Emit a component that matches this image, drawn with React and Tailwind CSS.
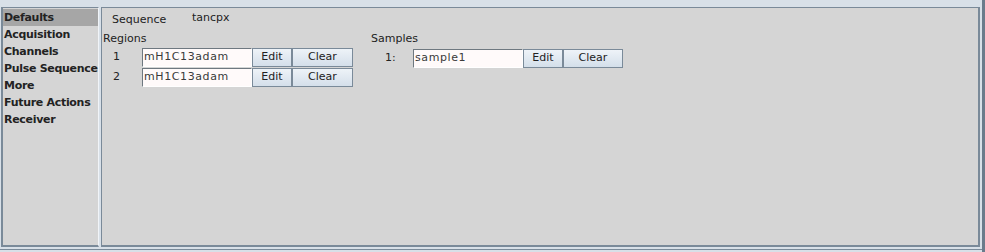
const FONT = { fontFamily: '"DejaVu Sans", Verdana, sans-serif' };

const sections = ['Defaults', 'Acquisition', 'Channels', 'Pulse Sequence', 'More', 'Future Actions', 'Receiver'];

const Button = ({ children, w }) => (
  <div
    className={`${w} h-[19px] flex items-center justify-center border border-[#7a8a99] bg-gradient-to-b from-[#eef3f8] to-[#d4dfea] text-[11px] text-[#222]`}
  >
    {children}
  </div>
);

const Field = ({ value }) => (
  <div className="w-[110px] h-[19px] flex items-center pl-[1px] border-t border-l border-[#6e7880] border-b border-r border-b-white border-r-white bg-[#fffafa] text-[11px] tracking-[0.6px] text-[#3a3a3a]">
    {value}
  </div>
);

const Row = ({ label, labelW, labelPad, value, clearW }) => (
  <div className="flex items-center">
    <div className={`${labelW} ${labelPad} text-[11px] text-[#222]`}>{label}</div>
    <Field value={value} />
    <Button w="w-[40px]">Edit</Button>
    <Button w={clearW}>Clear</Button>
  </div>
);

export default function App() {
  return (
    <div className="w-[985px] h-[252px] bg-[#d8e0e8] flex overflow-hidden" style={FONT}>
      <div className="flex-1 flex pt-[7px] pl-[1px] gap-[2px] h-[250px] border-b border-[#7a8a99]">
        <div className="w-[98px] h-[240px] bg-[#d5d5d5] border-l-2 border-t border-b-2 border-r border-[#7a8a99] border-r-[#f0f4f8] pt-[1px]">
          {sections.map((s, i) => (
            <div
              key={s}
              className={`h-[17px] leading-[17px] pl-[1px] text-[11px] font-bold tracking-[-0.3px] whitespace-nowrap text-[#222] ${i === 0 ? 'bg-[#a6a6a6]' : ''}`}
            >
              {s}
            </div>
          ))}
        </div>
        <div className="w-[879px] h-[240px] bg-[#d5d5d5] border-l border-t border-b-2 border-r-2 border-[#7a8a99] pl-[1px]">
          <div className="flex items-center h-[21px] pt-[3px] pl-[9px] text-[11px] text-[#222]">
            <span className="w-[80px]">Sequence</span>
            <span className="-mt-[3px]">tancpx</span>
          </div>
          <div className="flex gap-[18px]">
            <div className="flex flex-col">
              <div className="h-[19px] leading-[19px] text-[11px] text-[#222]">Regions</div>
              <div className="flex flex-col gap-[1px]">
                <Row label="1" labelW="w-[39px]" labelPad="pl-[10px]" value="mH1C13adam" clearW="w-[61px]" />
                <Row label="2" labelW="w-[39px]" labelPad="pl-[10px]" value="mH1C13adam" clearW="w-[61px]" />
              </div>
            </div>
            <div className="flex flex-col">
              <div className="h-[19px] leading-[19px] text-[11px] text-[#222]">Samples</div>
              <div className="mt-[1px]">
                <Row label="1:" labelW="w-[42px]" labelPad="pl-[14px]" value="sample1" clearW="w-[60px]" />
              </div>
            </div>
          </div>
        </div>
      </div>
      <div className="w-[3px] h-full bg-[#6b7b8b]" />
    </div>
  );
}
